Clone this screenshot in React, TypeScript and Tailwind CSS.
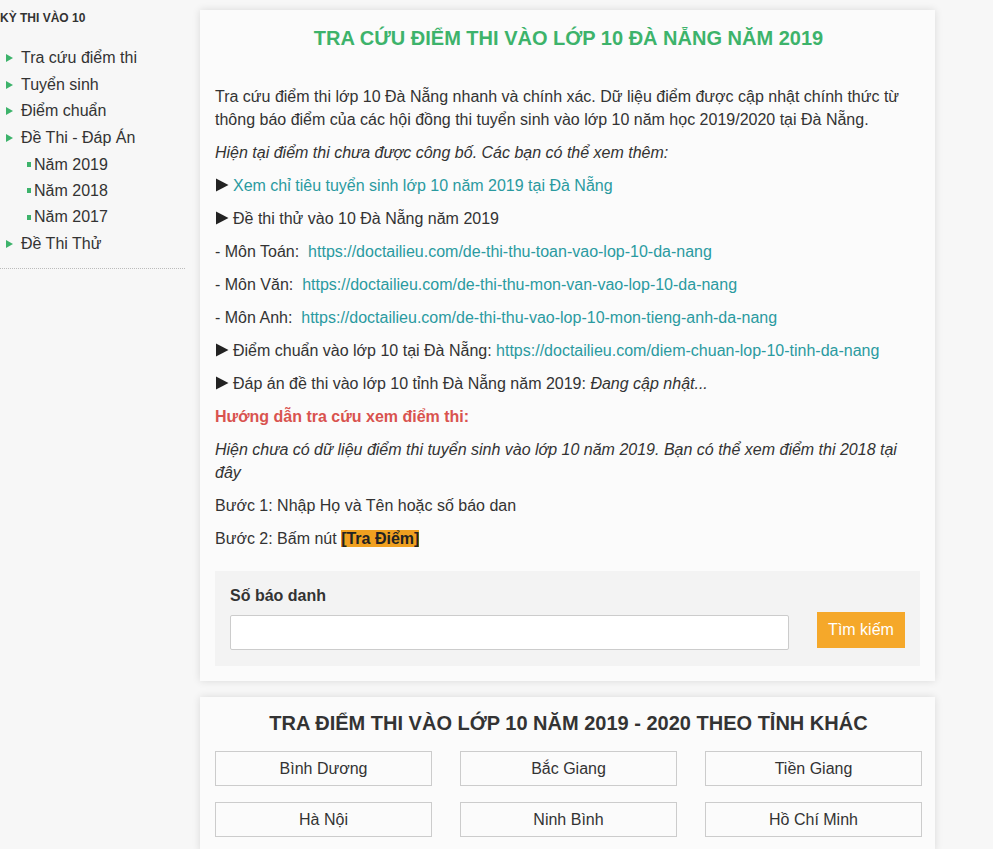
import React from 'react';

const menu = [
  { label: 'Tra cứu điểm thi' },
  { label: 'Tuyển sinh' },
  { label: 'Điểm chuẩn' },
  { label: 'Đề Thi - Đáp Án', children: ['Năm 2019', 'Năm 2018', 'Năm 2017'] },
  { label: 'Đề Thi Thử' },
];

const provinces = ['Bình Dương', 'Bắc Giang', 'Tiền Giang', 'Hà Nội', 'Ninh Bình', 'Hồ Chí Minh'];

const Arrow = () => (
  <svg width="7" height="8" viewBox="0 0 7 8" className="shrink-0">
    <path d="M0 0 L7 4 L0 8 Z" fill="#3db36b" />
  </svg>
);

// black ▶ in front of list lines
const Tri = () => (
  <svg width="14" height="14" viewBox="0 0 14 14" className="inline-block align-[-1px] mr-[4px]">
    <path d="M1 0.5 L13.5 7 L1 13.5 Z" fill="#222" />
  </svg>
);

const A = ({ children }: { children: React.ReactNode }) => (
  <a href="#" className="text-[#2a9aa0]">{children}</a>
);

export default function App() {
  return (
    <div className="min-h-[849px] bg-[#f7f7f7] text-[#333] font-['Liberation_Sans',Arial,sans-serif] flex">
      {/* Sidebar */}
      <aside className="w-[185px] shrink-0">
        <h3 className="text-[12px] font-bold pt-[11px] leading-[14px] uppercase">Kỳ thi vào 10</h3>
        <ul className="mt-[20px] pb-[11px] border-b border-dotted border-[#bbb] text-[16px]">
          {menu.map((m) => (
            <li key={m.label}>
              <div className="flex items-center h-[26.6px] pl-[6px] gap-[8px]">
                <Arrow />
                <span>{m.label}</span>
              </div>
              {m.children && (
                <ul>
                  {m.children.map((c) => (
                    <li key={c} className="flex items-center h-[26.4px] pl-[27px] gap-[3px]">
                      <span className="w-[4px] h-[5px] bg-[#3db36b] inline-block" />
                      <span>{c}</span>
                    </li>
                  ))}
                </ul>
              )}
            </li>
          ))}
        </ul>
      </aside>

      {/* Main */}
      <main className="w-[735px] ml-[15px] pt-[10px] flex flex-col gap-[16px]">
        <section className="bg-[#fbfbfb] shadow-[0_0_8px_rgba(0,0,0,0.12)] pl-[15px] pr-[13px] pt-[16px] pb-[15px]">
          <h1 className="text-center text-[#3db36b] font-bold text-[20px] leading-[24px]">
            TRA CỨU ĐIỂM THI VÀO LỚP 10 ĐÀ NẴNG NĂM 2019
          </h1>
          <div className="mt-[35px] text-[16px] leading-[23px] flex flex-col gap-[10px]">
            <p>
              Tra cứu điểm thi lớp 10 Đà Nẵng nhanh và chính xác. Dữ liệu điểm được cập nhật chính thức từ thông báo
              điểm của các hội đồng thi tuyển sinh vào lớp 10 năm học 2019/2020 tại Đà Nẵng.
            </p>
            <p className="italic">Hiện tại điểm thi chưa được công bố. Các bạn có thể xem thêm:</p>
            <p>
              <Tri />
              <A>Xem chỉ tiêu tuyển sinh lớp 10 năm 2019 tại Đà Nẵng</A>
            </p>
            <p>
              <Tri />
              Đề thi thử vào 10 Đà Nẵng năm 2019
            </p>
            <p>
              - Môn Toán:&nbsp; <A>https://doctailieu.com/de-thi-thu-toan-vao-lop-10-da-nang</A>
            </p>
            <p>
              - Môn Văn:&nbsp; <A>https://doctailieu.com/de-thi-thu-mon-van-vao-lop-10-da-nang</A>
            </p>
            <p>
              - Môn Anh:&nbsp; <A>https://doctailieu.com/de-thi-thu-vao-lop-10-mon-tieng-anh-da-nang</A>
            </p>
            <p>
              <Tri />
              Điểm chuẩn vào lớp 10 tại Đà Nẵng: <A>https://doctailieu.com/diem-chuan-lop-10-tinh-da-nang</A>
            </p>
            <p>
              <Tri />
              Đáp án đề thi vào lớp 10 tỉnh Đà Nẵng năm 2019: <em>Đang cập nhật...</em>
            </p>
            <p className="font-bold text-[#d9534f]">Hướng dẫn tra cứu xem điểm thi:</p>
            <p className="italic">
              Hiện chưa có dữ liệu điểm thi tuyển sinh vào lớp 10 năm 2019. Bạn có thể xem điểm thi 2018 tại đây
            </p>
            <p>Bước 1: Nhập Họ và Tên hoặc số báo dan</p>
            <p>
              Bước 2: Bấm nút <b className="bg-[#f0a020] text-[#222]">[Tra Điểm]</b>
            </p>
          </div>

          <div className="mt-[21px] mr-[2px] bg-[#f3f3f3] px-[15px] pt-[15px] pb-[16px]">
            <label className="block font-bold text-[16px] leading-[20px]">Số báo danh</label>
            <div className="flex items-center mt-[9px]">
              <input
                type="text"
                className="w-[559px] h-[35px] bg-white border border-[#ccc] rounded-[2px] outline-none px-2"
              />
              <button className="ml-[28px] w-[88px] h-[36px] bg-[#f5a82a] text-white text-[16px] -mt-[6px]">
                Tìm kiếm
              </button>
            </div>
          </div>
        </section>

        <section className="bg-[#fbfbfb] shadow-[0_0_8px_rgba(0,0,0,0.12)] pl-[15px] pr-[13px] pt-[14px] pb-[15px]">
          <h2 className="text-center font-bold text-[20px] leading-[24px] text-[#333]">
            TRA ĐIỂM THI VÀO LỚP 10 NĂM 2019 - 2020 THEO TỈNH KHÁC
          </h2>
          <div className="mt-[16px] grid grid-cols-[217px_217px_217px] gap-x-[28px] gap-y-[16px]">
            {provinces.map((p) => (
              <a
                key={p}
                href="#"
                className="h-[35px] border border-[#ccc] flex items-center justify-center text-[16px] text-[#333]"
              >
                {p}
              </a>
            ))}
          </div>
        </section>
      </main>
    </div>
  );
}
